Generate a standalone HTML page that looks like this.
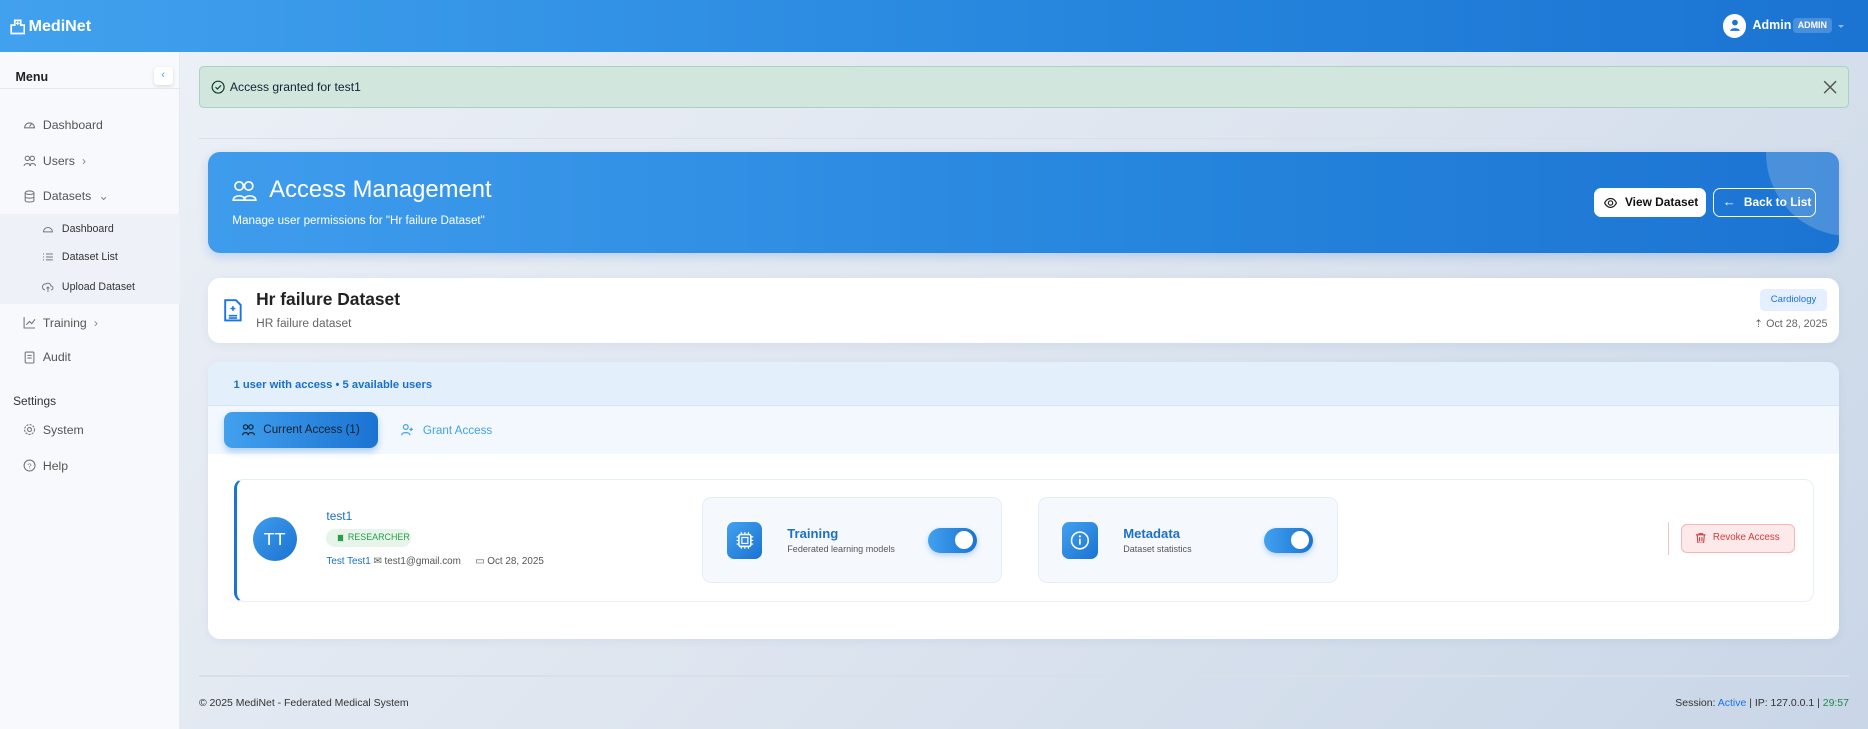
<!DOCTYPE html>
<html><head><meta charset="utf-8">
<style>
*{box-sizing:border-box;margin:0;padding:0}
html,body{width:1868px;height:729px;overflow:hidden}
body{font-family:"Liberation Sans",sans-serif}
#w{width:1568px;height:612px;zoom:1.19133;position:relative;background:linear-gradient(135deg,#eef1f7 0%,#dfe6f0 50%,#c9d6e7 100%);overflow:hidden}
.abs{position:absolute;white-space:nowrap}
.hdr{left:0;top:0;width:1568px;height:44px;background:linear-gradient(90deg,#42a1ee,#2585dd 60%,#1b73d2)}
.side{left:0;top:44px;width:151px;height:568px;background:#f7f9fc;border-right:1px solid #e6ebf2}
.mi{position:absolute;left:19px;font-size:10.3px;color:#555;display:flex;align-items:center;gap:6px}
.mi svg{width:11px;height:11px}
.sub{position:absolute;left:35px;font-size:8.9px;color:#333;display:flex;align-items:center;gap:7px}
.sub svg{width:10px;height:10px}
.card{background:#fff;border-radius:10px;box-shadow:0 2px 8px rgba(30,60,120,.06)}
.perm{background:#f5f9fe;border:1px solid #e2edf9;border-radius:8px;width:252px;height:72px;top:417px}
.pic{position:absolute;left:20px;top:20px;width:30px;height:31px;border-radius:6px;background:linear-gradient(135deg,#42a1ee,#1b73d2)}
.pt{position:absolute;left:71px;top:24px;font-size:11px;color:#1e6fc6;font-weight:bold}
.ps{position:absolute;left:71px;top:39px;font-size:7.6px;color:#555}
.tog{position:absolute;left:189px;top:25px;width:41px;height:21px;border-radius:11px;background:linear-gradient(90deg,#42a1ee,#1b73d2);box-shadow:0 2px 5px rgba(27,115,210,.3)}
.tog:after{content:"";position:absolute;right:3px;top:3px;width:15px;height:15px;border-radius:50%;background:#fff}
</style></head><body><div id="w">
<div class="abs hdr"></div>
<div class="abs" style="left:8px;top:14px;color:#fff;font-weight:bold;font-size:13.5px;display:flex;align-items:center;gap:3px">
<svg width="13" height="14" viewBox="0 0 13 14"><path d="M1 13V6h3V2h5v4h3v7z" fill="none" stroke="#fff" stroke-width="1.4"/><path d="M6.5 3v3M5 4.5h3" stroke="#fff"/></svg>MediNet</div>
<div class="abs" style="left:1446px;top:12px;width:20px;height:20px;border-radius:50%;background:#fff"></div>
<svg class="abs" style="left:1451px;top:16px" width="10" height="11" viewBox="0 0 10 11"><circle cx="5" cy="3" r="2.4" fill="#1b73d2"/><path d="M1 10c0-3 8-3 8 0z" fill="#1b73d2"/></svg>
<div class="abs" style="left:1471px;top:15px;color:#fff;font-weight:bold;font-size:10.5px">Admin</div>
<div class="abs" style="left:1505px;top:15px;background:rgba(255,255,255,.2);border-radius:3px;color:#fff;font-size:7.5px;font-weight:bold;padding:2px 4px">ADMIN</div>
<div class="abs" style="left:1543px;top:21px;border:3px solid transparent;border-top-color:rgba(255,255,255,.5)"></div>

<div class="abs side"></div>
<div class="abs" style="left:13px;top:59px;font-size:10.5px;font-weight:bold;color:#222">Menu</div>
<div class="abs" style="left:129px;top:56px;width:16px;height:15px;background:#fff;border-radius:3px;box-shadow:0 1px 3px rgba(0,0,0,.12);color:#42a1ee;font-size:9px;text-align:center;line-height:15px">‹</div>
<div class="abs" style="left:0;top:74px;width:151px;height:1px;background:#e3e8ef"></div>
<div class="abs" style="left:0;top:180px;width:151px;height:75px;background:#eef2f8"></div>
<div class="mi" style="top:99px"><svg viewBox="0 0 12 12"><path d="M1.5 9a4.5 4.5 0 1 1 9 0z" fill="none" stroke="#777"/><path d="M6 8l2-3" stroke="#777"/></svg>Dashboard</div>
<div class="mi" style="top:129px"><svg viewBox="0 0 12 12"><circle cx="4" cy="4" r="2" fill="none" stroke="#777"/><circle cx="8.5" cy="4" r="2" fill="none" stroke="#777"/><path d="M1 11c0-3 6-3 6 0M6 11c0-3 5.5-3 5.5 0" fill="none" stroke="#777"/></svg>Users <span style="color:#888">›</span></div>
<div class="mi" style="top:159px"><svg viewBox="0 0 12 12"><ellipse cx="6" cy="2.5" rx="4" ry="1.6" fill="none" stroke="#777"/><path d="M2 2.5v7c0 2 8 2 8 0v-7M2 6c0 2 8 2 8 0" fill="none" stroke="#777"/></svg>Datasets <span style="color:#888">⌄</span></div>
<div class="sub" style="top:187px"><svg viewBox="0 0 12 12"><path d="M1.5 9a4.5 4.5 0 1 1 9 0z" fill="none" stroke="#777"/></svg>Dashboard</div>
<div class="sub" style="top:211px"><svg viewBox="0 0 12 12"><path d="M1 3h1M1 6h1M1 9h1M4 3h7M4 6h7M4 9h7" stroke="#777"/></svg>Dataset List</div>
<div class="sub" style="top:236px"><svg viewBox="0 0 12 12"><path d="M3 9a3 3 0 1 1 1-6 3 3 0 0 1 5 2 2 2 0 0 1 0 4M6 11V6M4.5 7.5L6 6l1.5 1.5" fill="none" stroke="#777"/></svg>Upload Dataset</div>
<div class="mi" style="top:265px"><svg viewBox="0 0 12 12"><path d="M1 1v10h10M3 8l3-3 2 2 3-4" fill="none" stroke="#777"/></svg>Training <span style="color:#888">›</span></div>
<div class="mi" style="top:294px"><svg viewBox="0 0 12 12"><rect x="2" y="1" width="8" height="10" rx="1" fill="none" stroke="#777"/><path d="M4 4h4M4 6.5h4" stroke="#777"/></svg>Audit</div>
<div class="abs" style="left:11px;top:331px;font-size:10px;color:#333">Settings</div>
<div class="mi" style="top:355px"><svg viewBox="0 0 12 12"><circle cx="6" cy="6" r="4.5" fill="none" stroke="#777" stroke-dasharray="2 1"/><circle cx="6" cy="6" r="1.8" fill="none" stroke="#777"/></svg>System</div>
<div class="mi" style="top:385px"><svg viewBox="0 0 12 12"><circle cx="6" cy="6" r="5" fill="none" stroke="#777"/><text x="6" y="8.5" font-size="7" text-anchor="middle" fill="#777" font-family="Liberation Sans">?</text></svg>Help</div>

<div class="abs" style="left:167px;top:55px;width:1385px;height:36px;background:#d1e7dd;border:1px solid #a9d3bf;border-radius:4px"></div>
<svg class="abs" style="left:177px;top:67px" width="12" height="12" viewBox="0 0 12 12"><circle cx="6" cy="6" r="5" fill="none" stroke="#0f3d2a"/><path d="M3.8 6l1.6 1.6 3-3" fill="none" stroke="#0f3d2a"/></svg>
<div class="abs" style="left:193px;top:67px;font-size:10.2px;color:#123;">Access granted for test1</div>
<svg class="abs" style="left:1530px;top:67px" width="12" height="12" viewBox="0 0 12 12"><path d="M1 1l10 10M11 1L1 11" stroke="#555" stroke-width="1.2"/></svg>
<div class="abs" style="left:167px;top:116px;width:1385px;height:1px;background:#d8dfe8"></div>

<div class="abs" style="left:175px;top:128px;width:1369px;height:84px;border-radius:10px;background:linear-gradient(90deg,#3f9ced,#2584dc 60%,#1c74d2);overflow:hidden;box-shadow:0 3px 8px rgba(27,115,210,.2)">
<div style="position:absolute;left:1307px;top:-70px;width:140px;height:140px;border-radius:50%;background:rgba(255,255,255,.2)"></div></div>
<svg class="abs" style="left:195px;top:151px" width="21" height="18" viewBox="0 0 21 18"><circle cx="6" cy="5" r="3.5" fill="none" stroke="#fff" stroke-width="1.4"/><circle cx="14" cy="5" r="3.5" fill="none" stroke="#fff" stroke-width="1.4"/><path d="M1 17c0-5 10-5 10 0zM10 17c0-5 10-5 10 0z" fill="none" stroke="#fff" stroke-width="1.4"/></svg>
<div class="abs" style="left:226px;top:148px;font-size:20px;color:#fff">Access Management</div>
<div class="abs" style="left:195px;top:180px;font-size:9.8px;color:#fff">Manage user permissions for "Hr failure Dataset"</div>
<div class="abs" style="left:1338px;top:158px;width:94px;height:24px;background:#fff;border-radius:6px;font-size:10px;font-weight:bold;color:#111;line-height:24px;padding-left:26px">View Dataset</div>
<svg class="abs" style="left:1346px;top:165px" width="11" height="10" viewBox="0 0 11 10"><path d="M.5 5C3 0 8 0 10.5 5 8 10 3 10 .5 5z" fill="none" stroke="#222"/><circle cx="5.5" cy="5" r="1.8" fill="none" stroke="#222"/></svg>
<div class="abs" style="left:1438px;top:158px;width:86px;height:24px;border:1px solid #fff;border-radius:6px;font-size:10px;font-weight:bold;color:#fff;line-height:22px;padding-left:25px">Back to List</div>
<div class="abs" style="left:1446px;top:163px;font-size:11px;color:#fff">←</div>

<div class="abs card" style="left:175px;top:233px;width:1369px;height:55px"></div>
<svg class="abs" style="left:188px;top:251px" width="15" height="19" viewBox="0 0 15 19"><path d="M1 1h9l4 4v13H1z" fill="none" stroke="#1a73e8" stroke-width="1.6"/><path d="M4 14h7M4 16h7M7.5 6v4M5.5 8h4" stroke="#1a73e8" stroke-width="1.3"/></svg>
<div class="abs" style="left:215px;top:243px;font-size:14.6px;color:#222;font-weight:bold">Hr failure Dataset</div>
<div class="abs" style="left:215px;top:265px;font-size:10px;color:#666">HR failure dataset</div>
<div class="abs" style="left:1477px;top:243px;width:57px;height:18px;background:#e4efff;border-radius:4px;font-size:8px;color:#1a73e8;text-align:center;line-height:18px">Cardiology</div>
<div class="abs" style="right:34px;top:266px;font-size:9px;color:#666">⇡ Oct 28, 2025</div>

<div class="abs card" style="left:175px;top:304px;width:1369px;height:232px;overflow:hidden">
<div style="position:absolute;left:0;top:0;width:100%;height:37px;background:#e3f0fc;border-bottom:1px solid #d3e6f8"></div>
<div style="position:absolute;left:0;top:37px;width:100%;height:40px;background:#f2f8fe"></div>
</div>
<div class="abs" style="left:196px;top:318px;font-size:9.4px;font-weight:bold;color:#1a6fc9">1 user with access • 5 available users</div>
<div class="abs" style="left:188px;top:346px;width:129px;height:30px;border-radius:7px;background:linear-gradient(90deg,#42a1ee,#1b73d2);box-shadow:0 3px 6px rgba(27,115,210,.3);font-size:9.8px;color:#12202f;line-height:30px;padding-left:33px">Current Access (1)</div>
<svg class="abs" style="left:203px;top:356px" width="11" height="10" viewBox="0 0 11 10"><circle cx="3" cy="2.5" r="1.8" fill="none" stroke="#12202f"/><circle cx="7.5" cy="2.5" r="1.8" fill="none" stroke="#12202f"/><path d="M.5 9.5c0-3 5-3 5 0M5 9.5c0-3 5.5-3 5.5 0" fill="none" stroke="#12202f"/></svg>
<svg class="abs" style="left:337px;top:356px" width="11" height="10" viewBox="0 0 11 10"><circle cx="4" cy="2.5" r="2" fill="none" stroke="#42a1ee"/><path d="M.5 9.5c0-3 7-3 7 0M8.5 3v3M7 4.5h3" fill="none" stroke="#42a1ee"/></svg>
<div class="abs" style="left:355px;top:356px;font-size:9.8px;color:#42a1ee">Grant Access</div>

<div class="abs" style="left:196px;top:402px;width:1327px;height:103px;border:1px solid #e6eff9;border-left:3px solid #1b73d2;border-radius:8px;background:#fff"></div>
<div class="abs" style="left:212px;top:434px;width:37px;height:37px;border-radius:50%;background:linear-gradient(135deg,#3f9ced,#1b73d2);color:#fff;font-size:15px;text-align:center;line-height:37px">TT</div>
<div class="abs" style="left:274px;top:427px;font-size:10px;color:#1b6fc6">test1</div>
<div class="abs" style="left:274px;top:444px;width:71px;height:15px;border-radius:8px;background:#e6f4ea;font-size:7.5px;color:#2a9d4a;line-height:15px;padding-left:18px">RESEARCHER</div>
<div class="abs" style="left:283px;top:448px;width:6px;height:7px;background:#2a9d4a;border:1px solid #cfe9d5"></div>
<div class="abs" style="left:274px;top:467px;font-size:8.3px;color:#1b6fc6">Test Test1 <span style="color:#555">✉ test1@gmail.com</span><span style="color:#555;margin-left:12px">▭ Oct 28, 2025</span></div>

<div class="abs perm" style="left:589px"><div class="pic"><svg width="30" height="31" viewBox="0 0 30 31"><rect x="10" y="10.5" width="10" height="10" rx="1.5" fill="none" stroke="#fff" stroke-width="1.3"/><rect x="12.5" y="13" width="5" height="5" fill="none" stroke="#fff"/><path d="M12 8.5v2M15 8.5v2M18 8.5v2M12 20.5v2M15 20.5v2M18 20.5v2M8 12.5h2M8 15.5h2M8 18.5h2M20 12.5h2M20 15.5h2M20 18.5h2" stroke="#fff"/></svg></div><div class="pt">Training</div><div class="ps">Federated learning models</div><div class="tog"></div></div>
<div class="abs perm" style="left:871px"><div class="pic"><svg width="30" height="31" viewBox="0 0 30 31"><circle cx="15" cy="15.5" r="7" fill="none" stroke="#fff" stroke-width="1.3"/><path d="M15 14v5" stroke="#fff" stroke-width="1.4"/><circle cx="15" cy="12" r=".9" fill="#fff"/></svg></div><div class="pt">Metadata</div><div class="ps">Dataset statistics</div><div class="tog"></div></div>

<div class="abs" style="left:1400px;top:438px;width:1px;height:28px;background:#f3c6c6"></div>
<div class="abs" style="left:1411px;top:440px;width:96px;height:24px;border-radius:5px;background:#fde9e9;border:1px solid #f4b6b6;font-size:8.2px;color:#d53b3b;line-height:22px;padding-left:26px">Revoke Access</div>
<svg class="abs" style="left:1424px;top:447px" width="8" height="9" viewBox="0 0 8 9"><path d="M0 1.5h8M2.5 1.5V.5h3v1M1 1.5l.6 7h4.8l.6-7M3 3.5v3.5M5 3.5v3.5" fill="none" stroke="#d53b3b" stroke-width=".9"/></svg>

<div class="abs" style="left:167px;top:567px;width:1385px;height:1px;background:#d8dfe8"></div>
<div class="abs" style="left:167px;top:586px;font-size:8.8px;color:#333">© 2025 MediNet - Federated Medical System</div>
<div class="abs" style="right:16px;top:586px;font-size:8.8px;color:#333">Session: <span style="color:#1a73e8">Active</span> | IP: 127.0.0.1 | <span style="color:#1e8a4a">29:57</span></div>
</div></body></html>
